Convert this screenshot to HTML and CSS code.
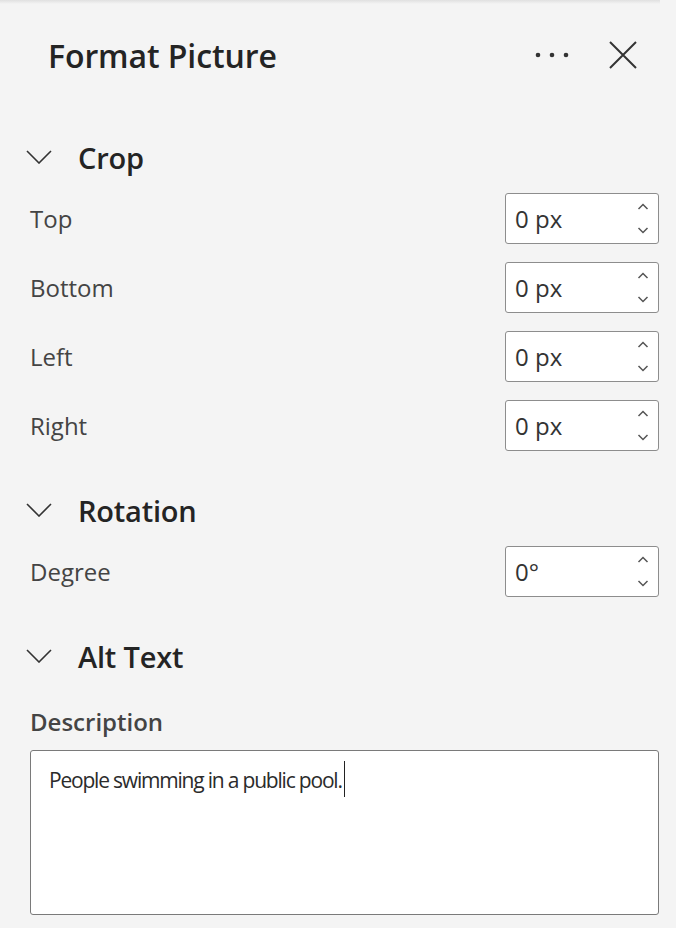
FILE: index.html
```html
<!DOCTYPE html>
<html lang="en">
<head>
    <meta charset="UTF-8">
    <title>Format Picture</title>
    <link rel="stylesheet" href="styles.css">
</head>
<body>
    <div class="pane">
        <div class="header">
            <h1 class="title">Format Picture</h1>
            <div class="header-actions">
                <svg class="more" width="40" height="8" viewBox="0 0 40 8"><circle cx="4" cy="4" r="2.3"/><circle cx="18" cy="4" r="2.3"/><circle cx="32" cy="4" r="2.3"/></svg>
                <svg class="close" width="30" height="30" viewBox="0 0 30 30"><path d="M2 2 L28 28 M28 2 L2 28"/></svg>
            </div>
        </div>

        <!-- Crop -->
        <div class="section-head">
            <svg class="chevron" width="26" height="14" viewBox="0 0 26 14"><path d="M1 1 L13 13 L25 1"/></svg>
            <h2>Crop</h2>
        </div>
        <div class="rows">
            <div class="row"><span class="label">Top</span><div class="spin"><span>0 px</span><span class="arrows"><svg width="12" height="7" viewBox="0 0 12 7"><path d="M1.5 6 L6 1.5 L10.5 6"/></svg><svg width="12" height="7" viewBox="0 0 12 7"><path d="M1.5 1 L6 5.5 L10.5 1"/></svg></span></div></div>
            <div class="row"><span class="label">Bottom</span><div class="spin"><span>0 px</span><span class="arrows"><svg width="12" height="7" viewBox="0 0 12 7"><path d="M1.5 6 L6 1.5 L10.5 6"/></svg><svg width="12" height="7" viewBox="0 0 12 7"><path d="M1.5 1 L6 5.5 L10.5 1"/></svg></span></div></div>
            <div class="row"><span class="label">Left</span><div class="spin"><span>0 px</span><span class="arrows"><svg width="12" height="7" viewBox="0 0 12 7"><path d="M1.5 6 L6 1.5 L10.5 6"/></svg><svg width="12" height="7" viewBox="0 0 12 7"><path d="M1.5 1 L6 5.5 L10.5 1"/></svg></span></div></div>
            <div class="row"><span class="label">Right</span><div class="spin"><span>0 px</span><span class="arrows"><svg width="12" height="7" viewBox="0 0 12 7"><path d="M1.5 6 L6 1.5 L10.5 6"/></svg><svg width="12" height="7" viewBox="0 0 12 7"><path d="M1.5 1 L6 5.5 L10.5 1"/></svg></span></div></div>
        </div>

        <!-- Rotation -->
        <div class="section-head spaced">
            <svg class="chevron" width="26" height="14" viewBox="0 0 26 14"><path d="M1 1 L13 13 L25 1"/></svg>
            <h2>Rotation</h2>
        </div>
        <div class="rows">
            <div class="row"><span class="label">Degree</span><div class="spin"><span>0°</span><span class="arrows"><svg width="12" height="7" viewBox="0 0 12 7"><path d="M1.5 6 L6 1.5 L10.5 6"/></svg><svg width="12" height="7" viewBox="0 0 12 7"><path d="M1.5 1 L6 5.5 L10.5 1"/></svg></span></div></div>
        </div>

        <!-- Alt Text -->
        <div class="section-head spaced">
            <svg class="chevron" width="26" height="14" viewBox="0 0 26 14"><path d="M1 1 L13 13 L25 1"/></svg>
            <h2>Alt Text</h2>
        </div>
        <div class="field-label">Description</div>
        <div class="textbox">People swimming in a public pool.<span class="caret"></span></div>
    </div>
</body>
</html>
```

FILE: styles.css
```css
body {
    margin: 0;
    background: #f4f4f4;
    font-family: "Open Sans", "Noto Sans", sans-serif;
    color: #242424;
}

.pane {
    height: 928px;
    overflow: hidden;
    background: linear-gradient(to bottom, #e0e0e0 0, #f4f4f4 4px) no-repeat;
    background-size: 660px 6px;
}

.header {
    display: flex;
    align-items: center;
    justify-content: space-between;
    height: 110px;
    padding: 0 38px 0 48px;
}

.title {
    margin: 0;
    font-size: 32px;
    font-weight: 600;
    letter-spacing: -0.1px;
}

.header-actions {
    display: flex;
    align-items: center;
    gap: 34px;
}

.more circle {
    fill: #333;
}

.close path,
.chevron path {
    fill: none;
    stroke: #333;
    stroke-width: 2;
}

.chevron path {
    stroke-width: 1.6;
}

.section-head {
    display: flex;
    align-items: center;
    gap: 26px;
    height: 40px;
    margin-top: 27px;
    padding-left: 26px;
}

.section-head.spaced {
    margin-top: 39px;
}

.section-head h2 {
    margin: 0;
    font-size: 29px;
    font-weight: 600;
    letter-spacing: -0.2px;
}

.rows {
    display: flex;
    flex-direction: column;
    gap: 18px;
    margin-top: 16px;
    padding: 0 17px 0 30px;
}

.row {
    display: flex;
    align-items: center;
    justify-content: space-between;
}

.label {
    font-size: 24px;
    color: #444;
}

.spin {
    display: flex;
    align-items: center;
    justify-content: space-between;
    box-sizing: border-box;
    width: 154px;
    height: 51px;
    padding: 0 9px 0 9px;
    background: #fff;
    border: 1px solid #8d8d8d;
    border-radius: 3px;
    font-size: 24px;
    color: #333;
}

.arrows {
    display: flex;
    flex-direction: column;
    gap: 17px;
}

.arrows svg path {
    fill: none;
    stroke: #555;
    stroke-width: 1.5;
}

.field-label {
    margin: 32px 0 0 30px;
    height: 28px;
    line-height: 28px;
    font-size: 24px;
    font-weight: 600;
    color: #444;
}

.textbox {
    box-sizing: border-box;
    height: 165px;
    margin: 14px 17px 0 30px;
    padding: 10px 18px;
    background: #fff;
    border: 1px solid #7a7a7a;
    border-radius: 3px;
    font-size: 21px;
    letter-spacing: -1.2px;
    line-height: 36px;
    color: #2b2b2b;
}

.caret {
    display: inline-block;
    width: 1px;
    height: 36px;
    margin-left: 2px;
    background: #222;
    vertical-align: -9px;
}
```
